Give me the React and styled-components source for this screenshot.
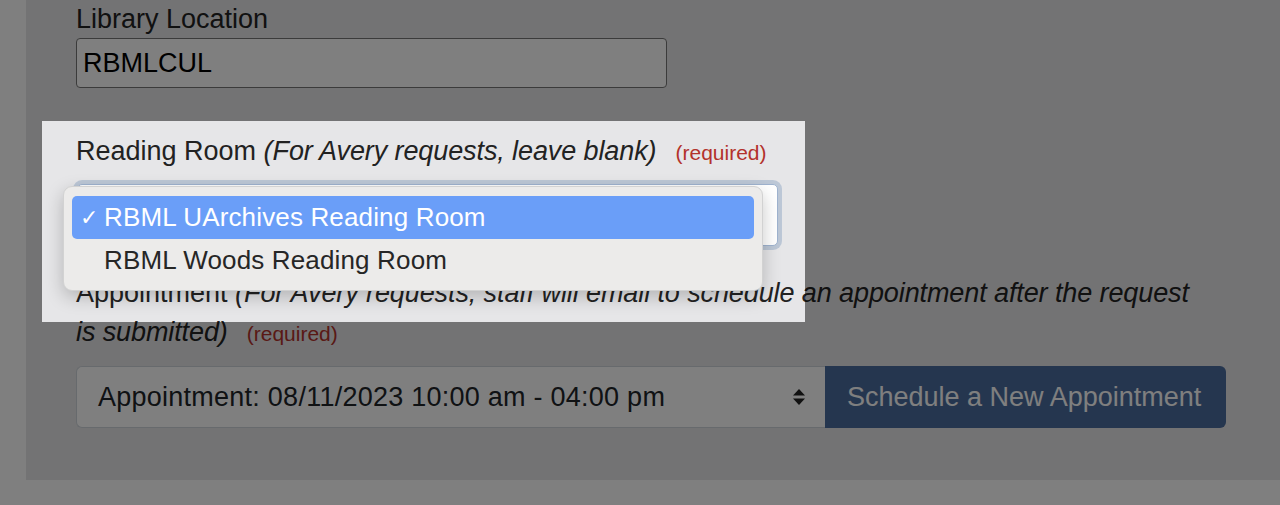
import React from 'react';
import styled, { createGlobalStyle } from 'styled-components';

const GlobalStyle = createGlobalStyle`
  html, body {
    margin: 0;
    padding: 0;
    background: #ffffff;
    font-family: "Liberation Sans", Arial, sans-serif;
    color: #222;
  }
`;

const Page = styled.div`
  height: 505px;
  padding-left: 26px;
  overflow: hidden;
`;

const Panel = styled.div`
  height: 480px;
  background: #e6e6e8;
  padding: 0 50px;
  box-sizing: border-box;
`;

const Group = styled.div`
  position: relative;
  margin-top: ${(p) => p.$top || 0}px;
`;

const Label = styled.div`
  font-size: 27px;
  line-height: 39px;
  color: #222;
  max-width: 1125px;

  em {
    font-style: italic;
    letter-spacing: -0.1px;
  }
`;

const Required = styled.span`
  font-size: 21px;
  color: #b3322b;
  margin-left: 19px;
`;

const TextInput = styled.input`
  display: block;
  width: 591px;
  height: 50px;
  margin-top: -1px;
  box-sizing: border-box;
  border: 1px solid #767676;
  border-radius: 4px;
  background: #fff;
  padding: 0 6px;
  font-family: inherit;
  font-size: 27px;
  color: #000;
  outline: none;
`;

const SelectBox = styled.div`
  width: 701px;
  height: 62px;
  margin-top: 12px;
  margin-left: 1px;
  box-sizing: border-box;
  background: #fff;
  border: 1px solid #9fb3cf;
  border-radius: 5px;
  box-shadow: 0 0 0 4px #bcc7d6;
`;

const Spotlight = styled.div`
  position: absolute;
  top: -11px;
  left: -34px;
  width: 763px;
  height: 201px;
  z-index: 10;
  pointer-events: none;
  box-shadow: 0 0 0 3000px rgba(0, 0, 0, 0.5);
`;

const Menu = styled.ul`
  position: absolute;
  top: 54px;
  left: -13px;
  width: 700px;
  height: 105px;
  box-sizing: border-box;
  margin: 0;
  padding: 9px 8px;
  list-style: none;
  background: #ecebea;
  border: 1px solid #d2d2d2;
  border-radius: 9px;
  box-shadow: 0 6px 18px rgba(0, 0, 0, 0.22);
  z-index: 20;
`;

const MenuItem = styled.li`
  display: flex;
  align-items: center;
  height: 43px;
  padding-left: 8px;
  border-radius: 5px;
  font-size: 26px;
  letter-spacing: 0.15px;
  background: ${(p) => (p.$active ? '#6a9ef8' : 'transparent')};
  color: ${(p) => (p.$active ? '#fff' : '#262626')};
`;

const Check = styled.span`
  width: 24px;
  font-size: 22px;
`;

const Row = styled.div`
  display: flex;
  margin-top: 13px;
`;

const AppointmentSelect = styled.div`
  width: 749px;
  height: 62px;
  box-sizing: border-box;
  display: flex;
  align-items: center;
  justify-content: space-between;
  padding: 0 19px 0 21px;
  background: #fff;
  border: 1px solid #ced4da;
  border-right: none;
  border-radius: 6px 0 0 6px;
  font-size: 27px;
  letter-spacing: 0.25px;
  color: #212529;
`;

const Button = styled.button`
  width: 401px;
  height: 62px;
  border: none;
  border-radius: 0 6px 6px 0;
  background: #4a6c9e;
  color: #ffffff;
  font-family: inherit;
  font-size: 27px;
  text-align: left;
  padding: 0 0 0 22px;
`;

function Arrows() {
  return (
    <svg width="14" height="18" viewBox="0 0 14 18">
      <path d="M7 1 L13 7.5 L1 7.5 Z" fill="#222" />
      <path d="M7 17 L13 10.5 L1 10.5 Z" fill="#222" />
    </svg>
  );
}

export default function App() {
  return (
    <>
      <GlobalStyle />
      <Page>
        <Panel>
          <Group>
            <Label>Library Location</Label>
            <TextInput readOnly value="RBMLCUL" />
          </Group>

          <Group $top={44}>
            <Spotlight />
            <Label>
              Reading Room <em>(For Avery requests, leave blank)</em>
              <Required>(required)</Required>
            </Label>
            <SelectBox />
            <Menu>
              <MenuItem $active>
                <Check>✓</Check>RBML UArchives Reading Room
              </MenuItem>
              <MenuItem>
                <Check />RBML Woods Reading Room
              </MenuItem>
            </Menu>
          </Group>

          <Group $top={28}>
            <Label>
              Appointment <em>(For Avery requests, staff will email to schedule an appointment after the request is submitted)</em>
              <Required>(required)</Required>
            </Label>
            <Row>
              <AppointmentSelect>
                Appointment: 08/11/2023 10:00 am - 04:00 pm
                <Arrows />
              </AppointmentSelect>
              <Button>Schedule a New Appointment</Button>
            </Row>
          </Group>
        </Panel>
      </Page>
    </>
  );
}
